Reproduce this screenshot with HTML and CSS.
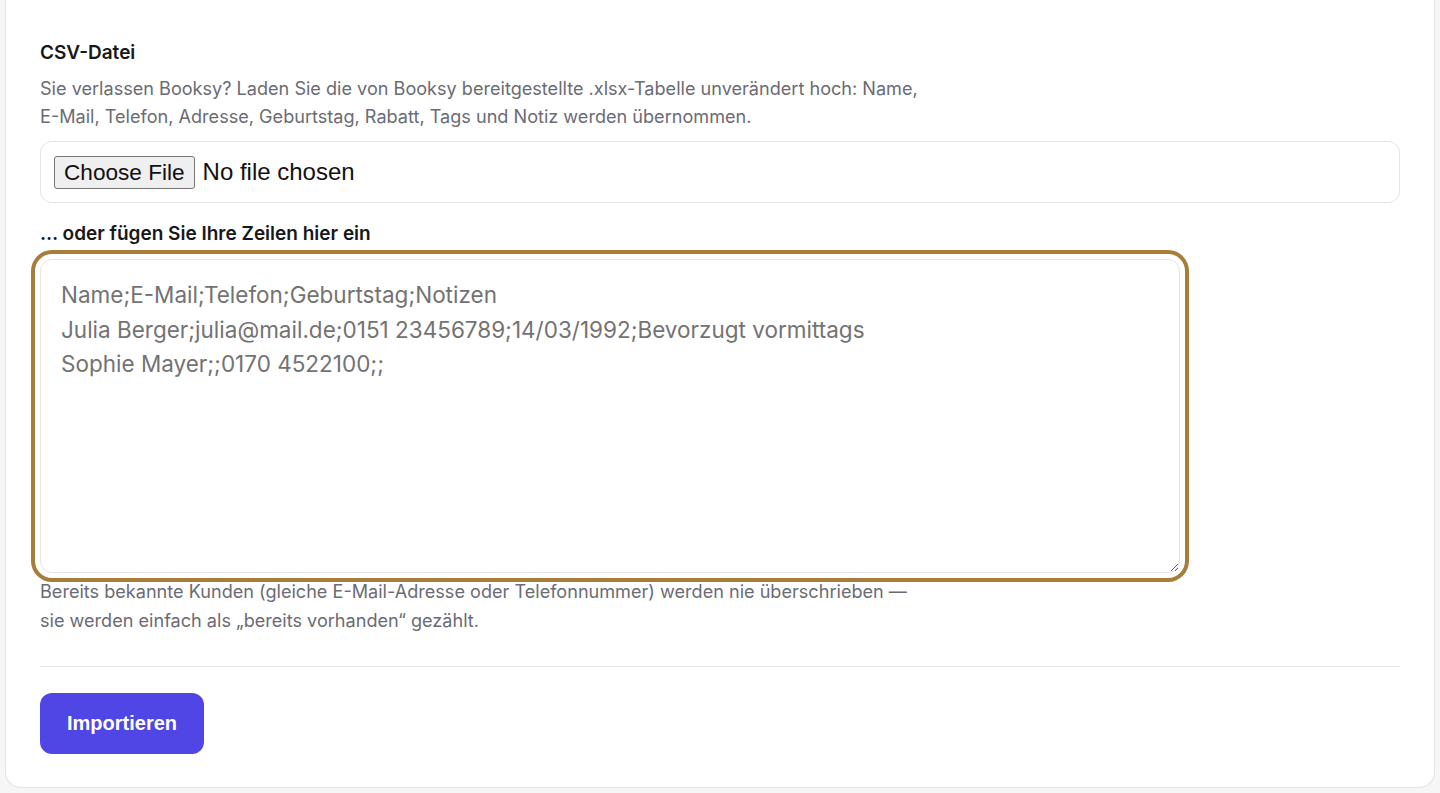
FILE: index.html
```html
<!DOCTYPE html>
<html lang="de">

<head>
  <title>Kunden importieren</title>
  <meta name="viewport" content="width=device-width, initial-scale=1">
  <link rel="stylesheet" href="styles.css">
</head>

<body>

  <div class="card">
    <form class="import-form" onsubmit="return false">
      <label class="field-label" for="csvFile">CSV-Datei</label>
      <p class="hint hint-top">Sie verlassen Booksy? Laden Sie die von Booksy bereitgestellte .xlsx-Tabelle unverändert hoch: Name, E-Mail, Telefon, Adresse, Geburtstag, Rabatt, Tags und Notiz werden übernommen.</p>

      <div class="file-box">
        <input type="file" id="csvFile" class="file-input" accept=".csv,.xlsx">
      </div>

      <label class="field-label label-paste" for="pasteRows">… oder fügen Sie Ihre Zeilen hier ein</label>
      <textarea id="pasteRows" class="paste-box is-focused" placeholder="Name;E-Mail;Telefon;Geburtstag;Notizen
Julia Berger;julia@mail.de;0151 23456789;14/03/1992;Bevorzugt vormittags
Sophie Mayer;;0170 4522100;;"></textarea>
      <p class="hint hint-bottom">Bereits bekannte Kunden (gleiche E-Mail-Adresse oder Telefonnummer) werden nie überschrieben — sie werden einfach als „bereits vorhanden“ gezählt.</p>

      <hr class="divider">

      <button type="submit" class="submit-btn">Importieren</button>
    </form>
  </div>

</body>

</html>
```

FILE: styles.css
```css
* {
  box-sizing: border-box;
}

body {
  margin: 0;
  padding: 0 5px 4px 5px;
  background: #f6f6f7;
  font-family: Inter, "Noto Sans", sans-serif;
  color: #18181b;
}

.card {
  background: #fff;
  border: 1px solid #e4e4e7;
  border-top: none;
  border-radius: 0 0 16px 16px;
  padding: 39px 34px 33px 34px;
}

.import-form {
  display: flex;
  flex-direction: column;
  align-items: flex-start;
}

.field-label {
  display: block;
  font-size: 19px;
  font-weight: 600;
  line-height: 28px;
  color: #18181b;
}

.label-paste {
  margin-top: 17px;
}

.hint {
  margin: 0;
  max-width: 880px;
  font-size: 18.1px;
  line-height: 28px;
  color: #6b6b73;
}

.hint-top {
  margin-top: 7px;
}

.hint-bottom {
  margin-top: 4px;
  line-height: 28.5px;
}

/* File picker */
.file-box {
  width: 100%;
  height: 62px;
  margin-top: 11px;
  padding: 14px 13px;
  border: 1px solid #e4e4e7;
  border-radius: 12px;
}

.file-input {
  font-family: "Liberation Sans", Arial, sans-serif;
  font-size: 24px;
  color: #111;
}

.file-input::file-selector-button {
  font-family: "Liberation Sans", Arial, sans-serif;
  font-size: 22.6px;
  height: 33px;
  padding: 0 9px;
  margin-right: 8px;
  border: 1px solid #767676;
  border-radius: 3px;
  background: #efefef;
  color: #111;
}

/* Paste area, shown in its focused state */
.paste-box {
  width: 1140px;
  height: 314px;
  margin-top: 11px;
  padding: 18px 20px;
  border: 1px solid #e5e5e5;
  border-radius: 12px;
  font-family: Inter, "Noto Sans", sans-serif;
  font-size: 22.5px;
  line-height: 34.5px;
  color: #333;
  outline: none;
}

.paste-box::placeholder {
  color: #737373;
}

.paste-box.is-focused {
  box-shadow: 0 0 0 5px #fff, 0 0 0 9px #a67d3a;
}

.divider {
  width: 100%;
  margin: 32px 0 26px 0;
  border: none;
  border-top: 1px solid #e4e4e7;
}

.submit-btn {
  height: 61px;
  padding: 0 27px;
  border: none;
  border-radius: 12px;
  background: #4f46e5;
  color: #fff;
  font-family: "Liberation Sans", Arial, sans-serif;
  font-size: 20px;
  font-weight: bold;
  cursor: pointer;
}
```
